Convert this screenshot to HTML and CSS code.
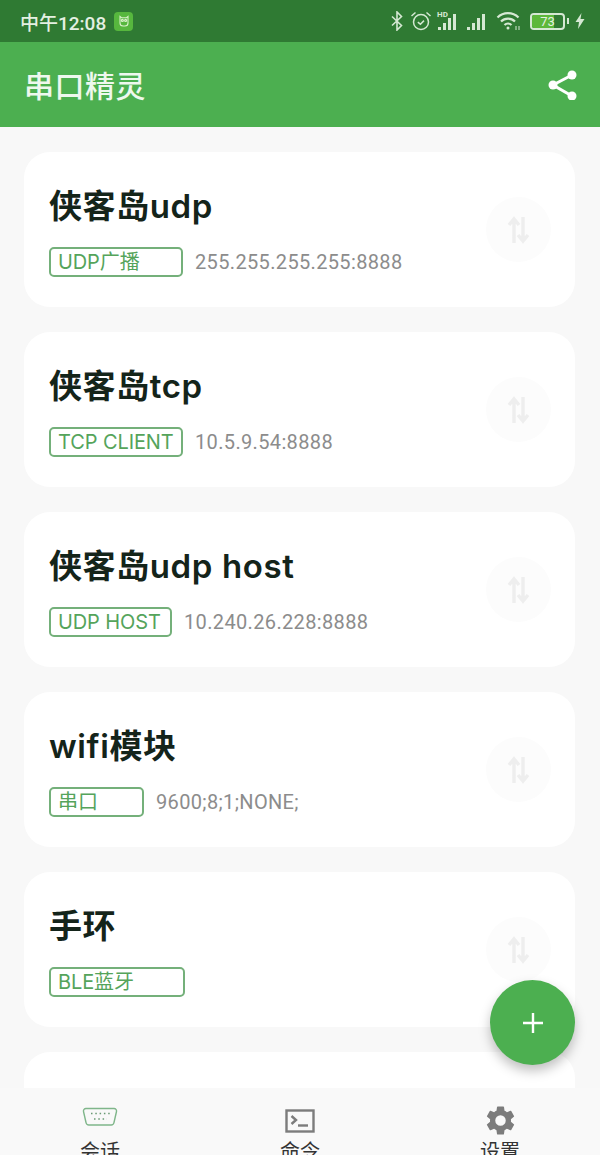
FILE: index.html
```html
<!DOCTYPE html>
<html lang="zh-CN">

<head>
    <meta charset="UTF-8">
    <meta name="viewport" content="width=device-width, initial-scale=1.0">
    <title>串口精灵</title>
    <link rel="stylesheet" href="styles.css">
</head>

<body>
    <div class="screen">

        <div class="status-bar">
            <div class="status-left">
                <span class="clock">中午12:08</span>
                <span class="app-badge">
                    <svg width="14" height="14" viewBox="0 0 14 14" fill="none" stroke="#d8f0c8" stroke-width="1.1">
                        <path d="M3 2.500l1.500 1.200h5L11 2.500V9a3 3 0 0 1-3 3H6a3 3 0 0 1-3-3z" />
                        <circle cx="5.400" cy="6.400" r="1" />
                        <circle cx="8.600" cy="6.400" r="1" />
                    </svg>
                </span>
            </div>
            <div class="status-right">
                <svg width="14" height="20" viewBox="0 0 14 20" fill="none" stroke="#d5e8d3" stroke-width="1.6">
                    <path d="M2 5.500l9.500 9L7 19V1l4.500 4.500L2 14.500" />
                </svg>
                <svg width="22" height="22" viewBox="0 0 22 22" fill="none" stroke="#d5e8d3" stroke-width="1.5">
                    <circle cx="11" cy="12" r="7.500" />
                    <path d="M7.800 12.200l2.600 2 3.600-3.600" />
                    <path d="M1.500 6l4-3.500M20.500 6l-4-3.500" />
                </svg>
                <span class="signal hd">
                    <i class="b1"></i><i class="b2"></i><i class="b3"></i><i class="b4"></i>
                    <b class="hd-label">HD</b>
                </span>
                <span class="signal">
                    <i class="b1"></i><i class="b2"></i><i class="b3"></i><i class="b4"></i>
                </span>
                <svg width="26" height="20" viewBox="0 0 26 20" fill="none" stroke="#d5e8d3" stroke-width="2.200">
                    <path d="M1.500 6.500a15 15 0 0 1 21 0" />
                    <path d="M5 10.500a10 10 0 0 1 14 0" />
                    <path d="M8.500 14a5 5 0 0 1 7 0" />
                    <circle cx="12" cy="17" r="1.500" fill="#d5e8d3" stroke="none" />
                    <path d="M20 19v-4M23 19v-4" stroke-width="1" />
                </svg>
                <span class="battery"><span class="battery-fill"></span><span class="battery-num">73</span></span>
                <span class="battery-cap"></span>
                <svg width="10" height="16" viewBox="0 0 10 16" fill="#d5e8d3">
                    <path d="M6.500 0L0.500 9h3.500l-1 7 6.500-10H5.500z" />
                </svg>
            </div>
        </div>

        <header class="app-bar">
            <h1 class="app-title">串口精灵</h1>
            <svg class="share-icon" width="32" height="32" viewBox="0 0 32 32" fill="#fff" stroke="#fff" stroke-width="3">
                <path d="M25 7L6 17l19 11" fill="none" />
                <circle cx="25" cy="7" r="4.500" stroke="none" />
                <circle cx="6" cy="17" r="4.500" stroke="none" />
                <circle cx="25" cy="28" r="4.500" stroke="none" />
            </svg>
        </header>

        <main class="session-list">
            <div class="card">
                <div class="card-body">
                    <div class="card-title">侠客岛udp</div>
                    <div class="card-meta">
                        <span class="tag tag-w134">UDP广播</span>
                        <span class="addr">255.255.255.255:8888</span>
                    </div>
                </div>
                <span class="connect-btn"><svg class="arrows" width="24" height="30" viewBox="0 0 24 30"><path d="M7 28V4M2 10l5-6 5 6M16 2v24M11 20l5 6 5-6" /></svg></span>
            </div>
            <div class="card">
                <div class="card-body">
                    <div class="card-title">侠客岛tcp</div>
                    <div class="card-meta">
                        <span class="tag tag-w134">TCP CLIENT</span>
                        <span class="addr">10.5.9.54:8888</span>
                    </div>
                </div>
                <span class="connect-btn"><svg class="arrows" width="24" height="30" viewBox="0 0 24 30"><path d="M7 28V4M2 10l5-6 5 6M16 2v24M11 20l5 6 5-6" /></svg></span>
            </div>
            <div class="card">
                <div class="card-body">
                    <div class="card-title">侠客岛udp host</div>
                    <div class="card-meta">
                        <span class="tag tag-w123">UDP HOST</span>
                        <span class="addr">10.240.26.228:8888</span>
                    </div>
                </div>
                <span class="connect-btn"><svg class="arrows" width="24" height="30" viewBox="0 0 24 30"><path d="M7 28V4M2 10l5-6 5 6M16 2v24M11 20l5 6 5-6" /></svg></span>
            </div>
            <div class="card">
                <div class="card-body">
                    <div class="card-title">wifi模块</div>
                    <div class="card-meta">
                        <span class="tag tag-w95">串口</span>
                        <span class="addr">9600;8;1;NONE;</span>
                    </div>
                </div>
                <span class="connect-btn"><svg class="arrows" width="24" height="30" viewBox="0 0 24 30"><path d="M7 28V4M2 10l5-6 5 6M16 2v24M11 20l5 6 5-6" /></svg></span>
            </div>
            <div class="card">
                <div class="card-body">
                    <div class="card-title">手环</div>
                    <div class="card-meta">
                        <span class="tag tag-w136">BLE蓝牙</span>
                    </div>
                </div>
                <span class="connect-btn"><svg class="arrows" width="24" height="30" viewBox="0 0 24 30"><path d="M7 28V4M2 10l5-6 5 6M16 2v24M11 20l5 6 5-6" /></svg></span>
            </div>
            <div class="card"></div>
        </main>

        <button class="fab" type="button">
            <svg width="24" height="24" viewBox="0 0 24 24" stroke="#fff" stroke-width="2.400">
                <path d="M12 2v20M2 12h20" />
            </svg>
        </button>

        <nav class="tab-bar">
            <div class="tab">
                <div class="tab-icon">
                    <svg class="icon-port" width="36" height="20" viewBox="0 0 36 20" fill="none" stroke="#7fb68a" stroke-width="1.400">
                        <path d="M4 1.500h28a2.500 2.500 0 0 1 2.500 3l-2.500 11a3 3 0 0 1-3 2.500H7a3 3 0 0 1-3-2.500L1.500 4.500A2.500 2.500 0 0 1 4 1.500z" />
                        <path d="M9 6.500h19M12 12h13" stroke="#6a9a74" stroke-width="1.500" stroke-dasharray="1.500 2.800" />
                    </svg>
                </div>
                <span class="tab-label">会话</span>
            </div>
            <div class="tab">
                <div class="tab-icon">
                    <svg class="icon-term" width="30" height="24" viewBox="0 0 30 24" fill="none" stroke="#7c7c7c" stroke-width="2.400">
                        <rect x="1.500" y="1.500" width="27" height="21" />
                        <path d="M6.500 7l4.500 4-4.500 4" />
                        <path d="M13 16.500h10" />
                    </svg>
                </div>
                <span class="tab-label">命令</span>
            </div>
            <div class="tab">
                <div class="tab-icon">
                    <svg width="35" height="35" viewBox="0 0 24 24" fill="#7c7c7c">
                        <path d="M19.140 12.940c.04-.3.060-.61.060-.94s-.02-.64-.07-.94l2.030-1.580a.49.490 0 0 0 .12-.61l-1.920-3.320a.49.490 0 0 0-.59-.22l-2.390.96a7 7 0 0 0-1.620-.94l-.36-2.540a.48.480 0 0 0-.48-.41h-3.840a.48.480 0 0 0-.47.410l-.36 2.540c-.59.240-1.130.570-1.620.94l-2.390-.96a.48.480 0 0 0-.59.220L2.740 8.870a.48.480 0 0 0 .12.610l2.030 1.580c-.05.300-.09.630-.09.940s.02.640.07.940l-2.030 1.580a.49.490 0 0 0-.12.610l1.920 3.320c.12.220.37.290.59.220l2.390-.96c.5.380 1.030.70 1.620.94l.36 2.540c.05.240.24.410.48.410h3.840c.24 0 .44-.17.47-.41l.36-2.540c.59-.24 1.130-.56 1.620-.94l2.390.96c.22.080.47 0 .59-.22l1.920-3.320a.48.480 0 0 0-.12-.61zM12 15.600a3.600 3.600 0 1 1 0-7.200 3.600 3.600 0 0 1 0 7.200z" />
                    </svg>
                </div>
                <span class="tab-label">设置</span>
            </div>
        </nav>

    </div>
</body>

</html>
```

FILE: styles.css
```css
* {
    box-sizing: border-box;
}

body {
    margin: 0;
    padding: 0;
    font-family: 'Roboto', 'Noto Sans CJK SC', sans-serif;
    background-color: #f8f8f8;
    overflow: hidden;
}

.screen {
    position: relative;
    display: flex;
    flex-direction: column;
    height: 1155px;
    overflow: hidden;
}

/* Status bar */
.status-bar {
    display: flex;
    flex-shrink: 0;
    justify-content: space-between;
    align-items: center;
    height: 42px;
    padding: 0 15px 0 20px;
    background-color: #2f7a33;
    color: #e4f0e2;
}

.status-left {
    display: flex;
    align-items: center;
    gap: 8px;
}

.clock {
    font-size: 19px;
    font-weight: 500;
}

.app-badge {
    display: flex;
    justify-content: center;
    align-items: center;
    width: 19px;
    height: 19px;
    border-radius: 4px;
    background-color: #57b73e;
}

.status-right {
    display: flex;
    align-items: center;
    gap: 6px;
}

.signal {
    position: relative;
    display: flex;
    align-items: flex-end;
    gap: 2px;
    width: 23px;
    height: 18px;
}

.signal i {
    display: block;
    width: 3px;
    background-color: #d5e8d3;
}

.signal .b1 {
    height: 3px;
}

.signal .b2 {
    height: 7px;
}

.signal .b3 {
    height: 12px;
}

.signal .b4 {
    height: 16px;
}

.hd-label {
    position: absolute;
    top: -2px;
    left: -1px;
    font-size: 8px;
    line-height: 10px;
    color: #d5e8d3;
}

.battery {
    position: relative;
    display: block;
    width: 35px;
    height: 17px;
    margin-left: 2px;
    border: 2px solid #d5e8d3;
    border-radius: 4px;
    overflow: hidden;
}

.battery-fill {
    position: absolute;
    top: 0;
    bottom: 0;
    left: 0;
    width: 22px;
    background-color: #5cb83a;
}

.battery-num {
    position: absolute;
    top: 0;
    left: 0;
    width: 100%;
    font-size: 13px;
    line-height: 13px;
    text-align: center;
    color: #e4f0e2;
}

.battery-cap {
    width: 2px;
    height: 6px;
    margin-left: -4px;
    background-color: #d5e8d3;
}

/* App bar */
.app-bar {
    display: flex;
    flex-shrink: 0;
    justify-content: space-between;
    align-items: center;
    height: 85px;
    padding: 0 21px 2px 24px;
    background-color: #4caf50;
}

.app-title {
    margin: 0;
    font-size: 30px;
    font-weight: 500;
    letter-spacing: 0.5px;
    color: #eef8ee;
}

/* Session cards */
.session-list {
    display: flex;
    flex: 1;
    flex-direction: column;
    gap: 25px;
    min-height: 0;
    padding: 25px 25px 0 24px;
    overflow: hidden;
}

.card {
    display: flex;
    flex-shrink: 0;
    justify-content: space-between;
    align-items: center;
    height: 155px;
    padding: 0 24px 0 25px;
    border-radius: 26px;
    background-color: #fff;
}

.card-body {
    padding-top: 2px;
}

.card-title {
    margin-bottom: 19px;
    font-family: 'Inter', 'Noto Sans CJK SC', sans-serif;
    font-size: 33px;
    font-weight: 600;
    letter-spacing: 0.6px;
    line-height: 44px;
    color: #14241a;
}

.card-meta {
    display: flex;
    align-items: center;
    gap: 12px;
}

.tag {
    height: 30px;
    padding-left: 7px;
    border: 2px solid #74b07a;
    border-radius: 5px;
    font-family: 'Inter', 'Noto Sans CJK SC', sans-serif;
    font-size: 20px;
    letter-spacing: -0.1px;
    line-height: 26px;
    color: #55a45b;
}

.tag-w134 {
    width: 134px;
}

.tag-w123 {
    width: 123px;
}

.tag-w95 {
    width: 95px;
}

.tag-w136 {
    width: 136px;
}

.addr {
    font-size: 20px;
    letter-spacing: 0.35px;
    color: #8c8c8c;
}

.connect-btn {
    display: flex;
    justify-content: center;
    align-items: center;
    width: 65px;
    height: 65px;
    border-radius: 50%;
    background-color: #fcfcfc;
}

.arrows {
    fill: none;
    stroke: #eeeeee;
    stroke-width: 3.500;
}

/* Floating add button */
.fab {
    position: absolute;
    top: 980px;
    left: 490px;
    display: flex;
    justify-content: center;
    align-items: center;
    width: 85px;
    height: 85px;
    padding: 0;
    border: none;
    border-radius: 50%;
    background-color: #4caf50;
    box-shadow: 0 6px 12px rgba(0, 0, 0, 0.25);
}

/* Bottom tabs */
.tab-bar {
    display: flex;
    flex-shrink: 0;
    justify-content: space-between;
    height: 67px;
    padding: 0 63px;
    background-color: #f9f9f9;
    overflow: hidden;
}

.tab {
    display: flex;
    flex-direction: column;
    align-items: center;
    width: 74px;
    padding-top: 15px;
}

.tab-icon {
    display: flex;
    flex-shrink: 0;
    justify-content: center;
    height: 36px;
}

.icon-port {
    margin-top: 4px;
}

.icon-term {
    margin-top: 6px;
}

.tab-label {
    font-size: 20px;
    line-height: 26px;
    color: #333;
}
```
